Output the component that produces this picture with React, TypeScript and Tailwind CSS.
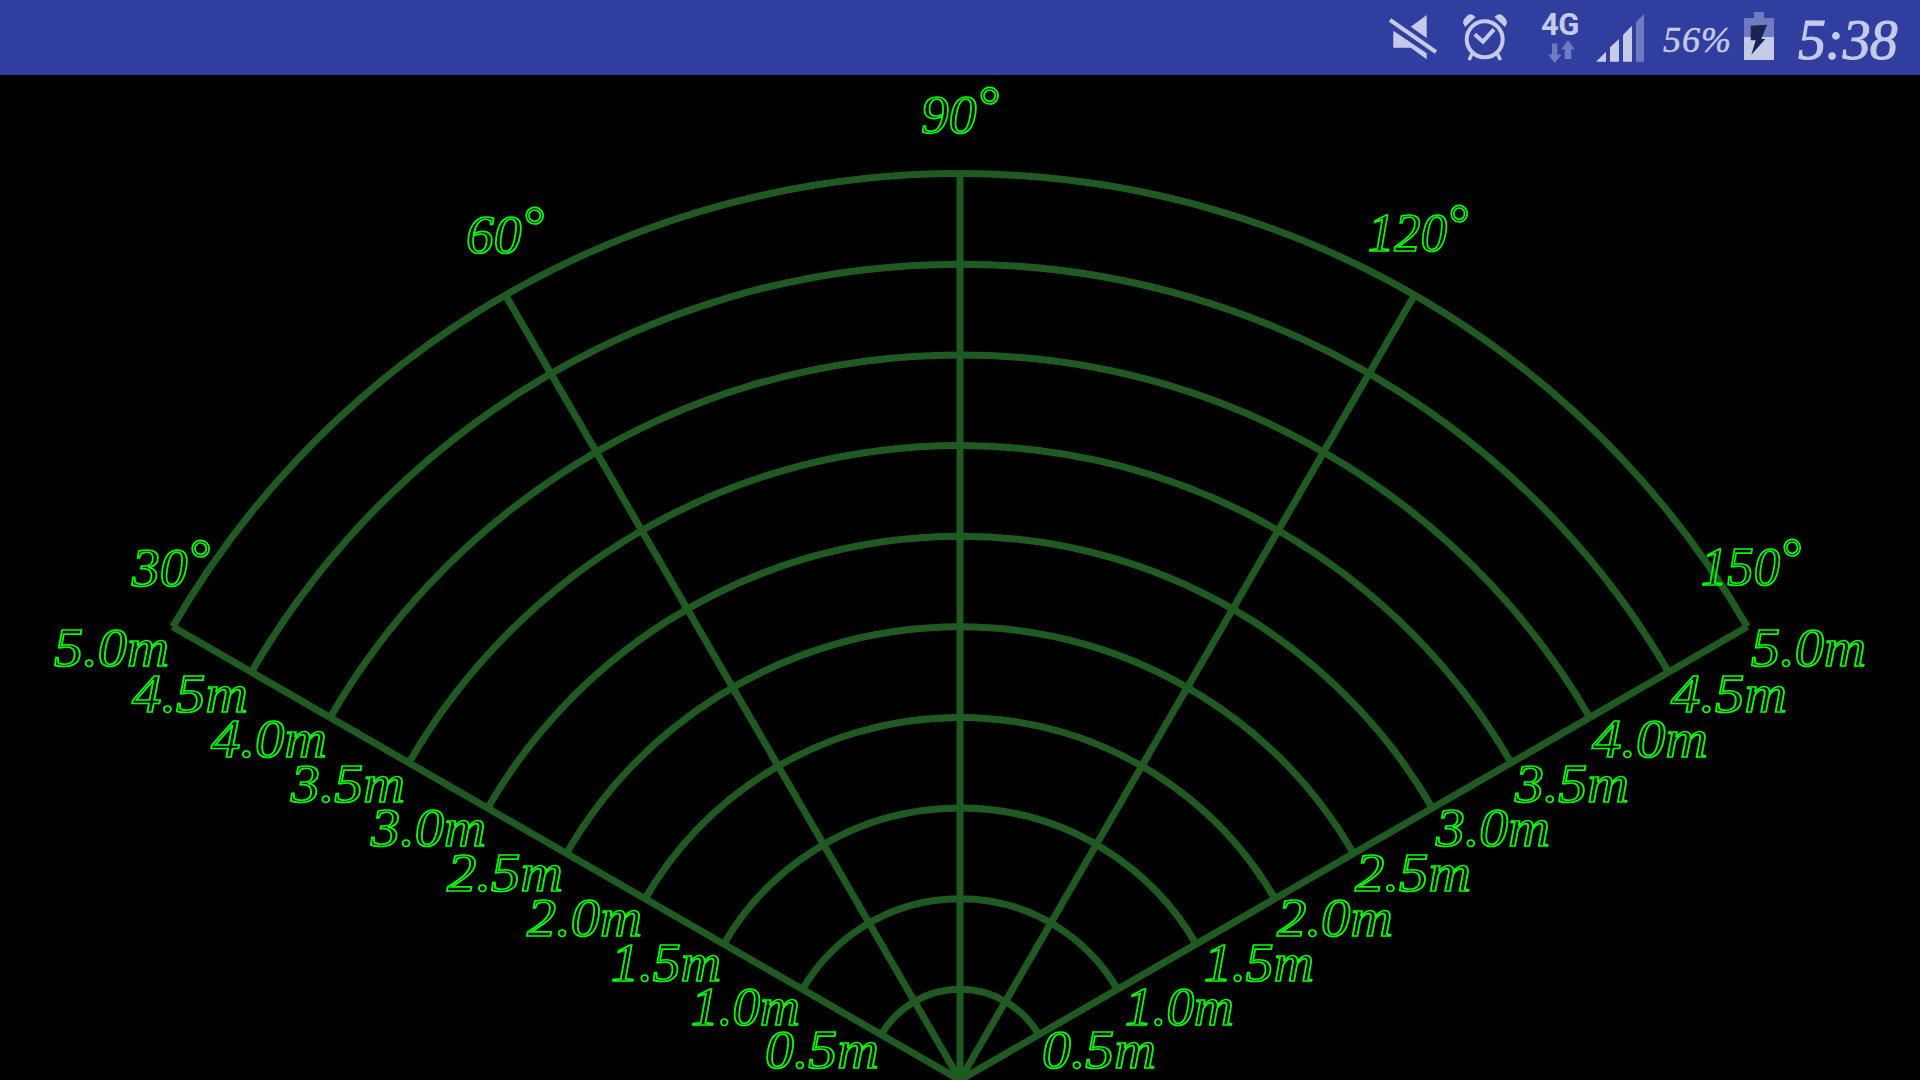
const CX = 960;
const CY = 1080;
const STEP = 90.64;
// the rings in the picture are a touch wider than they are tall
const STRETCH = 1.003;
const LINE = "#1f5a22";

function polar(r: number, deg: number) {
  const a = (deg * Math.PI) / 180;
  return { x: CX - r * STRETCH * Math.cos(a), y: CY - r * Math.sin(a) };
}

const rings = Array.from({ length: 10 }, (_, i) => (i + 1) * STEP);
const spokes = [30, 60, 90, 120, 150];

// text, x, baseline, width of each label, in page pixels
const rangeLabels: [string, number, number, number][] = [
  ["5.0m", 54, 666, 115],
  ["4.5m", 132, 712, 116],
  ["4.0m", 211, 757, 116],
  ["3.5m", 291, 802, 114],
  ["3.0m", 371, 846, 115],
  ["2.5m", 447, 891, 116],
  ["2.0m", 527, 936, 115],
  ["1.5m", 611, 981, 110],
  ["1.0m", 691, 1025, 109],
  ["0.5m", 765, 1068, 114],
  ["5.0m", 1751, 666, 115],
  ["4.5m", 1671, 712, 116],
  ["4.0m", 1592, 757, 116],
  ["3.5m", 1515, 802, 114],
  ["3.0m", 1436, 846, 114],
  ["2.5m", 1355, 891, 116],
  ["2.0m", 1277, 936, 116],
  ["1.5m", 1204, 981, 110],
  ["1.0m", 1125, 1025, 109],
  ["0.5m", 1042, 1068, 114],
];

const angleLabels: [string, number, number, number][] = [
  ["90", 921, 133, 78],
  ["60", 466, 253, 78],
  ["120", 1368, 251, 100],
  ["30", 132, 586, 78],
  ["150", 1701, 585, 100],
];

function Radar() {
  return (
    <svg viewBox="0 75 1920 1005" className="block h-[1005px] w-[1920px]">
      {rings.map((r) => {
        const a = polar(r, 30);
        const b = polar(r, 150);
        return (
          <path
            key={r}
            d={`M${a.x} ${a.y}A${r * STRETCH} ${r} 0 0 1 ${b.x} ${b.y}`}
            fill="none"
            stroke={LINE}
            strokeWidth={7}
          />
        );
      })}
      {spokes.map((deg) => {
        const p = polar(rings[9], deg);
        return <line key={deg} x1={CX} y1={CY} x2={p.x} y2={p.y} stroke={LINE} strokeWidth={7} />;
      })}
      <g
        fill="none"
        stroke="#00ff00"
        strokeWidth={1.7}
        fontFamily='"Liberation Serif", serif'
        fontStyle="italic"
        fontSize={54}
      >
        {rangeLabels.map(([t, x, y, w]) => (
          <text key={`${t}${x}`} x={x} y={y} textLength={w} lengthAdjust="spacingAndGlyphs">
            {t}
          </text>
        ))}
        {angleLabels.map(([t, x, y, w]) => (
          <text key={t} x={x} y={y} textLength={w} lengthAdjust="spacingAndGlyphs">
            {t}
            <tspan dy={-9}>°</tspan>
          </text>
        ))}
      </g>
    </svg>
  );
}

function StatusBar() {
  return (
    <div className="flex h-[75px] shrink-0 items-center bg-[#303f9f] pl-[1389px] text-[#c5cae9]">
      {/* muted speaker */}
      <svg width="48" height="45" viewBox="0 0 48 45" className="shrink-0">
        <path d="M21.7 11.7L37.7 0v23z" fill="#c5cae9" />
        <path d="M4.3 15.7v17h17.4l16 11.6v-6z" fill="#c5cae9" />
        <path d="M1 5l46 32" stroke="#c5cae9" strokeWidth="4" fill="none" />
      </svg>
      {/* alarm */}
      <svg width="44" height="47" viewBox="0 0 44 47" className="ml-[26px] shrink-0" fill="none">
        <circle cx="21.7" cy="25.3" r="18" stroke="#c5cae9" strokeWidth="4" />
        <path d="M0 9q0-3 2-5l3-3q2-1.500 5 0l2.500 2L2 13z" fill="#c5cae9" />
        <path d="M44 9q0-3-2-5l-3-3q-2-1.500-5 0l-2.500 2L42 13z" fill="#c5cae9" />
        <path d="M11.700 20.300l8.300 7.400 11-12.400" stroke="#c5cae9" strokeWidth="4" />
        <path d="M9 40l-3 6M34.500 40l3 6" stroke="#c5cae9" strokeWidth="3.500" />
      </svg>
      {/* 4G with data arrows */}
      <div className="ml-[34px] flex w-[38px] shrink-0 flex-col items-center">
        <span className="font-['Roboto',sans-serif] text-[31px] font-bold leading-[26px] tracking-[-0.5px]">4G</span>
        <svg width="27" height="23" viewBox="0 0 27 23" className="mt-[2px] ml-[2px]">
          <path d="M4 3.500h5.300v11h4.300L6.700 23 0 14.500h4z" fill="#6e7bc0" />
          <path d="M20 0l6.700 9.300h-3.400V19h-6.600V9.300h-3.400z" fill="#6e7bc0" />
        </svg>
      </div>
      {/* signal */}
      <svg width="48" height="48" viewBox="0 0 48 48" className="ml-[17px] shrink-0">
        <path d="M0 47.700l10-10v10zM14 47.700V33.300L23 25v22.700zM27 47.700V21l9-9.300v36z" fill="#c5cae9" />
        <path d="M40 47.700V8.300L48 0v47.700z" fill="#6e7bc0" />
      </svg>
      <span className="mt-[4px] ml-[19px] w-[70px] shrink-0 font-['Liberation_Serif',serif] text-[36px] leading-none tracking-[1px] italic [-webkit-text-stroke:0.5px_#c5cae9]">
        56%
      </span>
      {/* battery */}
      <svg width="30" height="48" viewBox="0 0 30 48" className="mb-[3px] ml-[11px] shrink-0">
        <path d="M10 0h10v6h10v19H0V6h10z" fill="#6e7bc0" />
        <rect x="0" y="25" width="30" height="23" fill="#c5cae9" />
        <path d="M6.700 13.700L23 12.700 17.300 27h4L7.300 42.700l4.400-14.400h-5z" fill="#1b2150" />
      </svg>
      <span className="mt-[4px] ml-[24px] font-['Liberation_Serif',serif] text-[56px] leading-none tracking-[-1px] italic [-webkit-text-stroke:1px_#c5cae9]">
        5:38
      </span>
    </div>
  );
}

export default function App() {
  return (
    <div className="flex h-[1080px] w-[1920px] flex-col overflow-hidden bg-black">
      <StatusBar />
      <Radar />
    </div>
  );
}
